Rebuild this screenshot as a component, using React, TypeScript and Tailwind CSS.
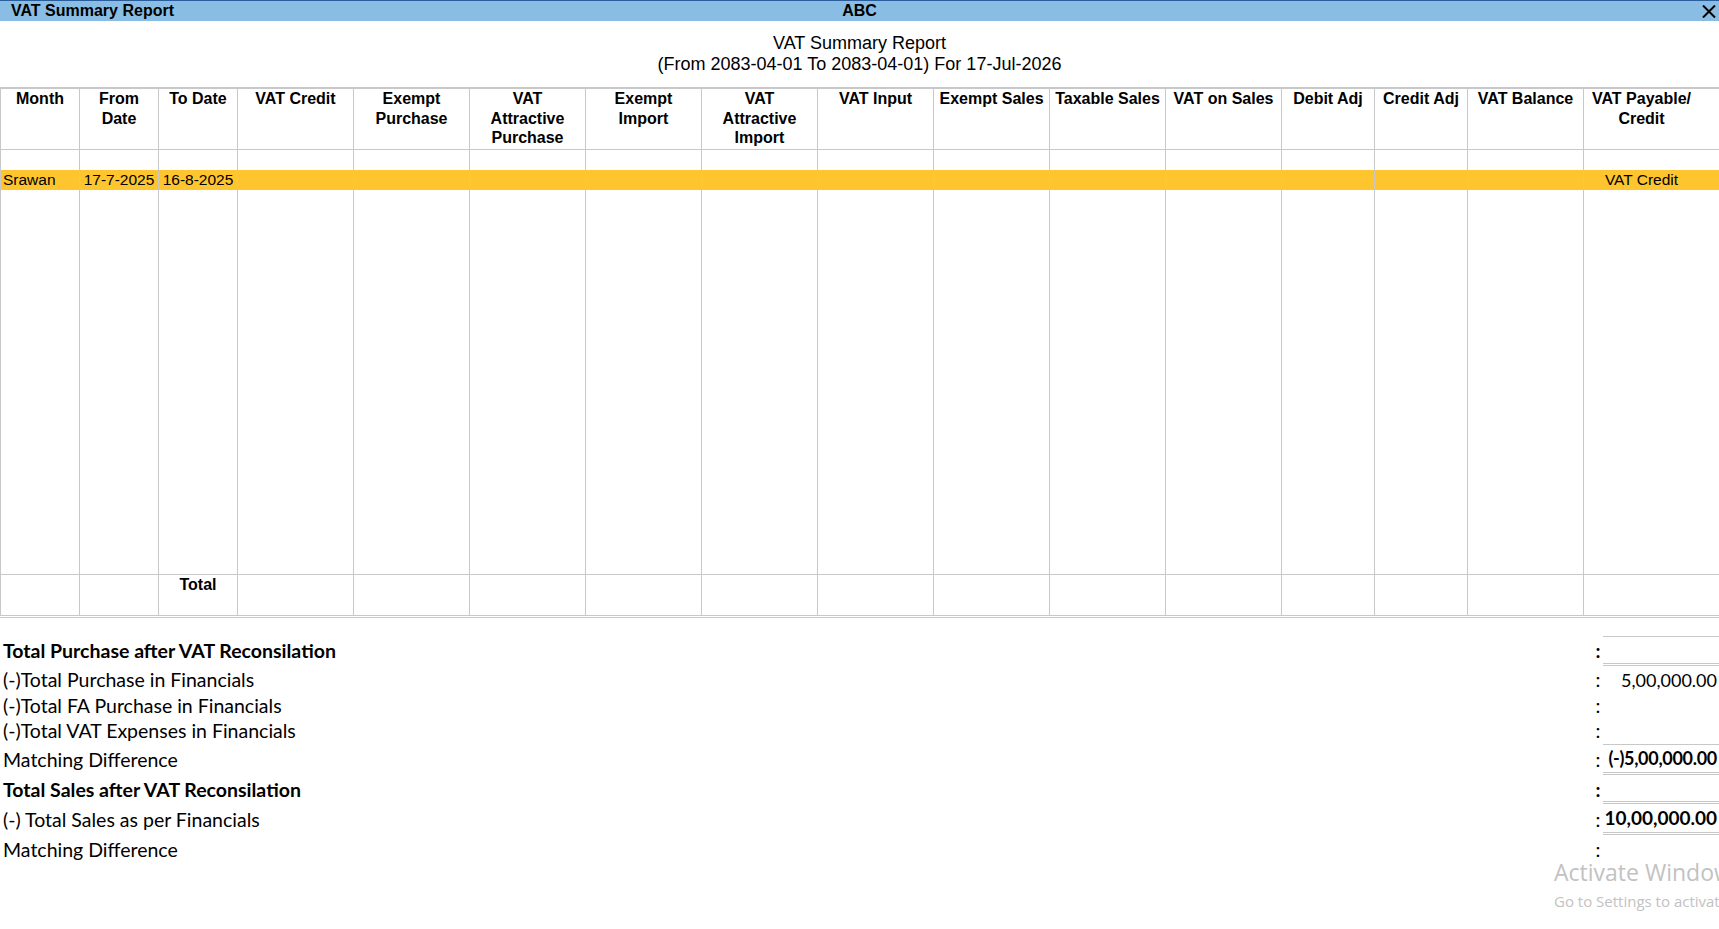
import React from "react";

const cols = [
  ["Month"],
  ["From", "Date"],
  ["To Date"],
  ["VAT Credit"],
  ["Exempt", "Purchase"],
  ["VAT", "Attractive", "Purchase"],
  ["Exempt", "Import"],
  ["VAT", "Attractive", "Import"],
  ["VAT Input"],
  ["Exempt Sales"],
  ["Taxable Sales"],
  ["VAT on Sales"],
  ["Debit Adj"],
  ["Credit Adj"],
  ["VAT Balance"],
  ["VAT Payable/", "Credit"],
];

const dataRow = ["Srawan", "17-7-2025", "16-8-2025", "", "", "", "", "", "", "", "", "", "", "", "", "VAT Credit"];

type Row = {
  label: string;
  bold?: boolean;
  value?: string;
  valueCls?: string;
  h: string;
  top?: boolean;
  bottom?: boolean;
};

const rows: Row[] = [
  { label: "Total Purchase after VAT Reconsilation", bold: true, h: "h-[30px]", top: true, bottom: true },
  { label: "(-)Total Purchase in Financials", value: "5,00,000.00", valueCls: "text-[18px]", h: "h-[28px]" },
  { label: "(-)Total FA Purchase in Financials", h: "h-[24px]" },
  { label: "(-)Total VAT Expenses in Financials", h: "h-[26px]" },
  {
    label: "Matching Difference",
    value: "(-)5,00,000.00",
    valueCls: "text-[18px] font-bold tracking-[-0.3px]",
    h: "h-[31px]",
    top: true,
    bottom: true,
  },
  { label: "Total Sales after VAT Reconsilation", bold: true, h: "h-[29px]", bottom: true },
  {
    label: "(-) Total Sales as per Financials",
    value: "10,00,000.00",
    valueCls: "text-[19px] font-bold",
    h: "h-[31px]",
    bottom: true,
  },
  { label: "Matching Difference", h: "h-[29px]" },
];

export default function App() {
  const cellBase = "border-l border-[#c8c8c8]";
  return (
    <div className="relative w-[1719px] h-[929px] overflow-hidden bg-white text-black font-['Liberation_Sans',Arial,sans-serif]">
      {/* Title bar */}
      <div className="grid grid-cols-3 items-center h-[21px] border-t border-[#2a5d9c] bg-[#89bde4]">
        <div className="pl-[11px] text-[16px] font-bold leading-[20px] whitespace-nowrap">VAT Summary Report</div>
        <div className="text-center text-[16px] font-bold leading-[20px]">ABC</div>
        <div className="flex justify-end pr-[3px]">
          <svg width="14" height="13" viewBox="0 0 14 13">
            <path d="M1 0.5 L13 12.5 M13 0.5 L1 12.5" stroke="#000" strokeWidth="2" fill="none" />
          </svg>
        </div>
      </div>

      {/* Report title */}
      <div className="pt-[12px] text-center text-[18px] leading-[21px]">
        <div>VAT Summary Report</div>
        <div>(From 2083-04-01 To 2083-04-01) For 17-Jul-2026</div>
      </div>

      {/* Table */}
      <div className="mt-[12px] border-t-2 border-[#c8c8c8]">
        <div className="grid grid-cols-[79px_79px_79px_116px_116px_116px_116px_116px_116px_116px_116px_116px_93px_93px_116px_136px]">
          {/* header */}
          {cols.map((lines, i) => (
            <div
              key={"h" + i}
              className={`${cellBase} h-[61px] border-b text-center text-[16px] font-bold leading-[19.5px] whitespace-nowrap ${i === 15 ? "pr-[20px]" : ""}`}
            >
              {lines.map((l, j) => (
                <div key={j}>{l}</div>
              ))}
            </div>
          ))}
          {/* spacer */}
          {cols.map((_, i) => (
            <div key={"s" + i} className={`${cellBase} h-[20px]`} />
          ))}
          {/* data row */}
          {dataRow.map((t, i) => (
            <div
              key={"d" + i}
              className={`${cellBase} h-[20px] bg-[#fec52f] text-[15.5px] leading-[20px] whitespace-nowrap ${
                i === 0 ? "pl-[2px] text-left" : "text-center"
              } ${i === 15 ? "pr-[20px]" : ""}`}
            >
              {t}
            </div>
          ))}
          {/* filler */}
          {cols.map((_, i) => (
            <div key={"f" + i} className={`${cellBase} h-[384px]`} />
          ))}
          {/* total */}
          {cols.map((_, i) => (
            <div
              key={"t" + i}
              className={`${cellBase} h-[41px] border-t text-center text-[16px] font-bold leading-[20px]`}
            >
              {i === 2 ? "Total" : ""}
            </div>
          ))}
        </div>
        <div className="h-[3px] border-y border-[#c8c8c8]" />
      </div>

      {/* Bottom reconciliation */}
      <div className="mt-[18px] font-['Lato','Open_Sans',sans-serif] text-[19.5px]">
        {rows.map((r, i) => (
          <div key={i} className={`flex items-stretch ${r.h}`}>
            <div className={`flex-1 flex items-center pl-[3px] whitespace-nowrap ${r.bold ? "font-bold" : ""}`}>
              {r.label}
            </div>
            <div className={`w-[14px] pl-[4px] flex items-center justify-center ${r.bold ? "font-bold" : ""}`}>:</div>
            <div
              className={`w-[116px] flex items-center justify-end pr-[2px] whitespace-nowrap border-[#c8c8c8] ${
                r.top ? "border-t" : ""
              } ${r.bottom ? "border-b-[3px] border-double" : ""} ${r.valueCls ?? ""}`}
            >
              {r.value ?? ""}
            </div>
          </div>
        ))}
      </div>

      {/* Watermark */}
      <div className="absolute left-[1554px] top-[856px] whitespace-nowrap text-[#c2c2c2] font-['Open_Sans','Noto_Sans',sans-serif] pointer-events-none">
        <div className="text-[23px] leading-[32px]">Activate Windows</div>
        <div className="text-[15px] leading-[20px] mt-[3px]">Go to Settings to activate Windows.</div>
      </div>
    </div>
  );
}
